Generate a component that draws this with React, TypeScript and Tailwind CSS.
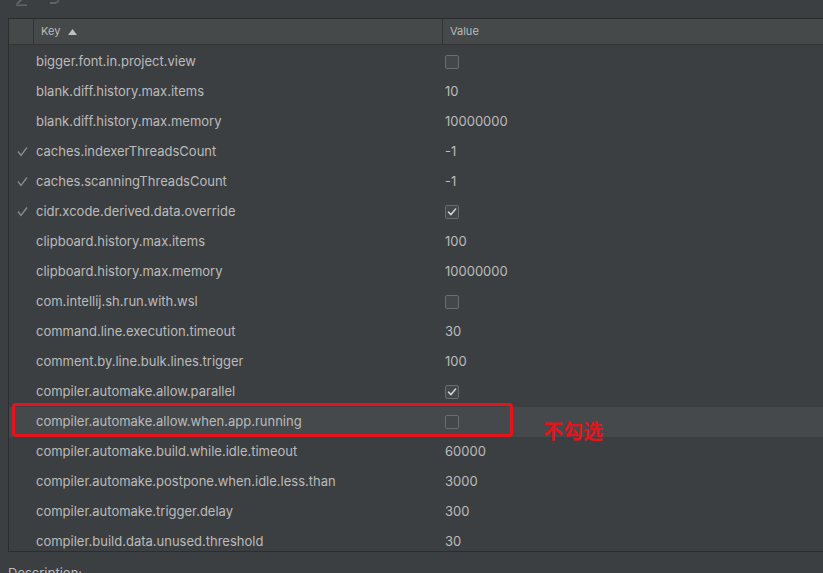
import React from "react";

type Row = { key: string; mod?: boolean; value: string | boolean; hl?: boolean };

const rows: Row[] = [
  { key: "bigger.font.in.project.view", value: false },
  { key: "blank.diff.history.max.items", value: "10" },
  { key: "blank.diff.history.max.memory", value: "10000000" },
  { key: "caches.indexerThreadsCount", value: "-1", mod: true },
  { key: "caches.scanningThreadsCount", value: "-1", mod: true },
  { key: "cidr.xcode.derived.data.override", value: true, mod: true },
  { key: "clipboard.history.max.items", value: "100" },
  { key: "clipboard.history.max.memory", value: "10000000" },
  { key: "com.intellij.sh.run.with.wsl", value: false },
  { key: "command.line.execution.timeout", value: "30" },
  { key: "comment.by.line.bulk.lines.trigger", value: "100" },
  { key: "compiler.automake.allow.parallel", value: true },
  { key: "compiler.automake.allow.when.app.running", value: false, hl: true },
  { key: "compiler.automake.build.while.idle.timeout", value: "60000" },
  { key: "compiler.automake.postpone.when.idle.less.than", value: "3000" },
  { key: "compiler.automake.trigger.delay", value: "300" },
  { key: "compiler.build.data.unused.threshold", value: "30" },
];

function Checkbox({ checked }: { checked: boolean }) {
  return (
    <div className="w-[14px] h-[14px] rounded-[2px] border border-[#6a6d70] bg-[#43474a] flex items-center justify-center">
      {checked && (
        <svg width="10" height="10" viewBox="0 0 10 10">
          <path d="M1.5 5.2 L4 7.6 L8.6 2" stroke="#d0d0d0" strokeWidth="1.6" fill="none" strokeLinecap="round" strokeLinejoin="round" />
        </svg>
      )}
    </div>
  );
}

export default function App() {
  return (
    <div
      className="relative w-[823px] h-[573px] overflow-hidden bg-[#3c3f41] text-[#bbbbbb]"
      style={{ fontFamily: 'Inter, "Liberation Sans", Arial, sans-serif' }}
    >
      {/* toolbar (clipped) */}
      <div className="h-[18px] relative flex items-start gap-[18px] pl-[15px] overflow-hidden">
        <svg width="14" height="14" viewBox="0 0 14 14" className="-mt-[8px]">
          <path d="M2 12 L11 3" stroke="#5f6365" strokeWidth="2" />
          <path d="M1 13.2 H12" stroke="#5f6365" strokeWidth="1.6" />
        </svg>
        <svg width="14" height="14" viewBox="0 0 14 14" className="-mt-[8px]">
          <path d="M3 11 H8 A3.5 3.5 0 0 0 8 4 H3" stroke="#5f6365" strokeWidth="1.8" fill="none" />
        </svg>
      </div>

      {/* table */}
      <div className="ml-[8px] h-[534px] border-l border-y border-[#2b2d2e] overflow-hidden">
        <div className="h-[26px] flex items-stretch bg-[#45494a] border-b border-[#323435] text-[11px]">
          <div className="w-[25px] border-r border-[#323435]" />
          <div className="w-[409px] border-r border-[#323435] flex items-center pl-[7px] gap-[8px]">
            <span>Key</span>
            <svg width="9" height="6" viewBox="0 0 9 6">
              <path d="M0 6 L4.5 0 L9 6 Z" fill="#c0c0c0" />
            </svg>
          </div>
          <div className="flex-1 flex items-center pl-[7px]">Value</div>
        </div>
        <div className="pt-[2px]">
          {rows.map((r) => (
            <div
              key={r.key}
              className={`h-[30px] flex items-center text-[13px] ${r.hl ? "bg-[#45494b]" : ""}`}
            >
              <div className="w-[25px] flex items-center justify-center pl-[2px] text-[#8a8d90]">
                {r.mod && (
                  <svg width="11" height="10" viewBox="0 0 11 10">
                    <path d="M1 4.5 L4 8.5 L10 0.5" stroke="#8a8d90" strokeWidth="1.3" fill="none" />
                  </svg>
                )}
              </div>
              <div className="w-[409px] pl-[2px]">{r.key}</div>
              <div className="flex-1 pl-[2px]">
                {typeof r.value === "boolean" ? <Checkbox checked={r.value} /> : r.value}
              </div>
            </div>
          ))}
        </div>
      </div>

      <div className="pl-[8px] pt-[12px] text-[13px]">Description:</div>

      {/* annotation */}
      <div className="absolute left-[12px] top-[403px] w-[501px] h-[34px] rounded-[4px] border-[3px] border-[#e3141b]" />
      <div
        className="absolute left-[543px] top-[421px] text-[20px] font-bold leading-none text-[#e3141b]"
        style={{ fontFamily: '"Noto Sans CJK SC", sans-serif' }}
      >
        不勾选
      </div>
    </div>
  );
}
